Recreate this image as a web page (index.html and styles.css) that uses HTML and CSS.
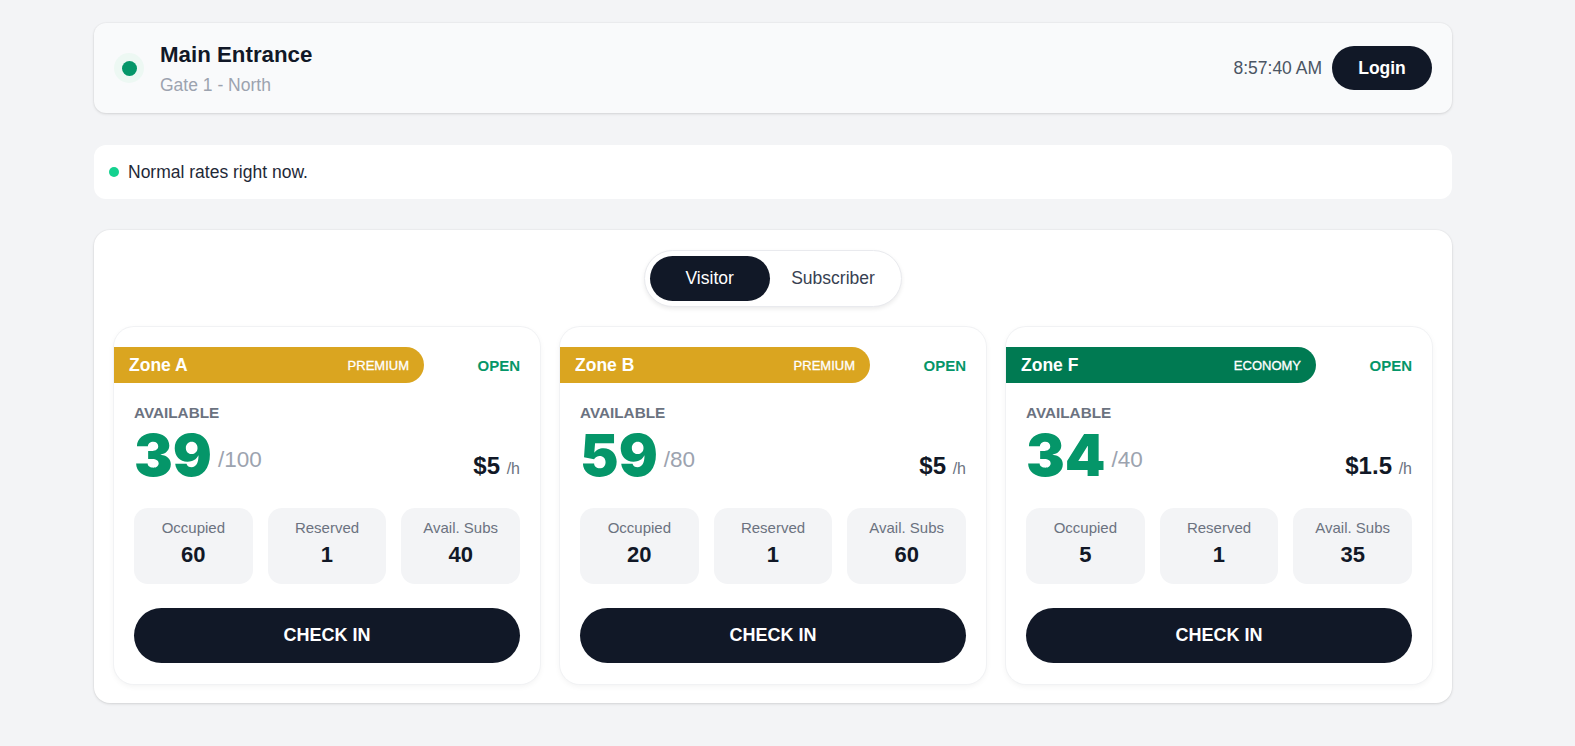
FILE: index.html
```html
<!DOCTYPE html>
<html lang="en">
<head>
<meta charset="utf-8">
<title>Main Entrance</title>
<link rel="stylesheet" href="styles.css">
</head>
<body>
<div class="page">
  <header class="gate-header">
    <div class="gate-info">
      <span class="status-dot"><span class="status-dot-inner"></span></span>
      <div class="gate-text">
        <div class="gate-title">Main Entrance</div>
        <div class="gate-sub">Gate 1 - North</div>
      </div>
    </div>
    <div class="gate-actions">
      <span class="clock">8:57:40 AM</span>
      <button class="login-btn">Login</button>
    </div>
  </header>

  <div class="rate-banner">
    <span class="rate-dot"></span>
    <span class="rate-text">Normal rates right now.</span>
  </div>

  <section class="main-card">
    <div class="toggle">
      <button class="toggle-btn active">Visitor</button>
      <button class="toggle-btn">Subscriber</button>
    </div>

    <div class="zones">
      <article class="zone">
        <div class="zone-head">
          <div class="zone-band premium">
            <span class="zone-name">Zone A</span>
            <span class="zone-tier">PREMIUM</span>
          </div>
          <span class="zone-status">OPEN</span>
        </div>
        <div class="zone-body">
          <div class="avail-label">AVAILABLE</div>
          <div class="avail-row">
            <div class="avail-count">
              <span class="avail-num">39</span>
              <span class="avail-total">/100</span>
            </div>
            <div class="price">$5 <span class="price-unit">/h</span></div>
          </div>
          <div class="stats">
            <div class="stat"><div class="stat-label">Occupied</div><div class="stat-value">60</div></div>
            <div class="stat"><div class="stat-label">Reserved</div><div class="stat-value">1</div></div>
            <div class="stat"><div class="stat-label">Avail. Subs</div><div class="stat-value">40</div></div>
          </div>
          <button class="checkin-btn">CHECK IN</button>
        </div>
      </article>

      <article class="zone">
        <div class="zone-head">
          <div class="zone-band premium">
            <span class="zone-name">Zone B</span>
            <span class="zone-tier">PREMIUM</span>
          </div>
          <span class="zone-status">OPEN</span>
        </div>
        <div class="zone-body">
          <div class="avail-label">AVAILABLE</div>
          <div class="avail-row">
            <div class="avail-count">
              <span class="avail-num">59</span>
              <span class="avail-total">/80</span>
            </div>
            <div class="price">$5 <span class="price-unit">/h</span></div>
          </div>
          <div class="stats">
            <div class="stat"><div class="stat-label">Occupied</div><div class="stat-value">20</div></div>
            <div class="stat"><div class="stat-label">Reserved</div><div class="stat-value">1</div></div>
            <div class="stat"><div class="stat-label">Avail. Subs</div><div class="stat-value">60</div></div>
          </div>
          <button class="checkin-btn">CHECK IN</button>
        </div>
      </article>

      <article class="zone">
        <div class="zone-head">
          <div class="zone-band economy">
            <span class="zone-name">Zone F</span>
            <span class="zone-tier">ECONOMY</span>
          </div>
          <span class="zone-status">OPEN</span>
        </div>
        <div class="zone-body">
          <div class="avail-label">AVAILABLE</div>
          <div class="avail-row">
            <div class="avail-count">
              <span class="avail-num">34</span>
              <span class="avail-total">/40</span>
            </div>
            <div class="price">$1.5 <span class="price-unit">/h</span></div>
          </div>
          <div class="stats">
            <div class="stat"><div class="stat-label">Occupied</div><div class="stat-value">5</div></div>
            <div class="stat"><div class="stat-label">Reserved</div><div class="stat-value">1</div></div>
            <div class="stat"><div class="stat-label">Avail. Subs</div><div class="stat-value">35</div></div>
          </div>
          <button class="checkin-btn">CHECK IN</button>
        </div>
      </article>
    </div>
  </section>
</div>
</body>
</html>
```

FILE: styles.css
```css
* { box-sizing: border-box; }

html, body {
  margin: 0;
  padding: 0;
}

body {
  background: #f3f4f6;
  font-family: "Liberation Sans", Arial, sans-serif;
  color: #111827;
  width: 1575px;
  height: 746px;
  overflow: hidden;
}

button {
  font-family: inherit;
  border: none;
  cursor: pointer;
}

.page {
  width: 1358px;
  margin-left: 94px;
  padding-top: 23px;
}

/* Header */
.gate-header {
  height: 90px;
  padding: 0 20px;
  display: flex;
  align-items: center;
  justify-content: space-between;
  background: #f9fafb;
  border-radius: 12px;
  box-shadow: 0 1px 3px rgba(0, 0, 0, 0.12), 0 0 0 1px rgba(0, 0, 0, 0.02);
}

.gate-info {
  display: flex;
  align-items: center;
  gap: 16px;
}

.status-dot {
  width: 30px;
  height: 30px;
  border-radius: 50%;
  background: #edf8f3;
  display: flex;
  align-items: center;
  justify-content: center;
}

.status-dot-inner {
  width: 15px;
  height: 15px;
  border-radius: 50%;
  background: #059669;
}

.gate-title {
  font-size: 22.3px;
  line-height: 26px;
  font-weight: 700;
  color: #111827;
}

.gate-sub {
  margin-top: 7px;
  font-size: 17.5px;
  line-height: 20px;
  color: #9ca3af;
}

.gate-actions {
  display: flex;
  align-items: center;
  gap: 10px;
}

.clock {
  font-size: 17.5px;
  color: #4b5563;
}

.login-btn {
  height: 44px;
  width: 100px;
  border-radius: 22px;
  background: #111827;
  color: #fff;
  font-size: 17.5px;
  font-weight: 700;
}

/* Rate banner */
.rate-banner {
  margin-top: 32px;
  height: 54px;
  padding: 0 15px;
  display: flex;
  align-items: center;
  gap: 9px;
  background: #fff;
  border-radius: 12px;
}

.rate-dot {
  width: 10px;
  height: 10px;
  border-radius: 50%;
  background: #14d18f;
}

.rate-text {
  font-size: 17.5px;
  color: #1f2937;
}

/* Main card */
.main-card {
  margin-top: 31px;
  padding: 20px 20px 19px;
  background: #fff;
  border-radius: 16px;
  box-shadow: 0 1px 3px rgba(0, 0, 0, 0.12), 0 0 0 1px rgba(0, 0, 0, 0.02);
}

.toggle {
  display: flex;
  width: max-content;
  margin: 0 auto;
  padding: 5px 5px;
  border: 1px solid #e9eaee;
  border-radius: 999px;
  background: #fff;
  box-shadow: 0 2px 4px rgba(0, 0, 0, 0.08);
}

.toggle-btn {
  height: 45px;
  min-width: 120px;
  padding: 0 21.5px;
  border-radius: 999px;
  background: transparent;
  color: #374151;
  font-size: 17.5px;
}

.toggle-btn.active {
  background: #111827;
  color: #fff;
}

.zones {
  margin-top: 20px;
  display: grid;
  grid-template-columns: repeat(3, 1fr);
  gap: 20px;
}

.zone {
  padding: 20px 0 21px;
  background: #fff;
  border-radius: 20px;
  box-shadow: 0 0 0 1px #f1f2f4, 0 2px 6px rgba(0, 0, 0, 0.06);
}

.zone-head {
  display: flex;
  align-items: center;
  justify-content: space-between;
  padding-right: 20px;
}

.zone-band {
  width: 310px;
  height: 36px;
  padding: 0 15px;
  display: flex;
  align-items: center;
  justify-content: space-between;
  border-radius: 0 18px 18px 0;
  color: #fff;
}

.zone-band.premium { background: #daa520; }
.zone-band.economy { background: #007a52; }

.zone-name {
  font-size: 17.5px;
  font-weight: 700;
}

.zone-tier {
  font-size: 13px;
  font-weight: 400;
  -webkit-text-stroke: 0.3px #fff;
}

.zone-status {
  font-size: 15px;
  font-weight: 700;
  color: #059669;
}

.zone-body {
  padding: 0 20px;
}

.avail-label {
  margin-top: 21px;
  font-size: 15.3px;
  line-height: 18px;
  font-weight: 700;
  color: #6b7280;
}

.avail-row {
  margin-top: 4px;
  display: flex;
  align-items: flex-end;
  justify-content: space-between;
}

.avail-count {
  display: flex;
  align-items: flex-end;
}

.avail-num {
  font-family: "Inter", "Liberation Sans", sans-serif;
  font-size: 58px;
  line-height: 58px;
  font-weight: 900;
  color: #059669;
}

.avail-total {
  margin-left: 6px;
  margin-bottom: 12px;
  font-size: 22.5px;
  line-height: 24px;
  color: #9ca3af;
}

.price {
  margin-bottom: 3px;
  font-size: 24px;
  line-height: 24px;
  font-weight: 700;
  color: #111827;
}

.price-unit {
  font-size: 16px;
  font-weight: 400;
  color: #6b7280;
}

.stats {
  margin-top: 24px;
  display: grid;
  grid-template-columns: repeat(3, 1fr);
  gap: 15px;
}

.stat {
  padding: 9px 0 11px;
  border-radius: 14px;
  background: #f3f4f6;
  text-align: center;
  line-height: 1.5;
}

.stat-label {
  font-size: 15px;
  color: #6b7280;
}

.stat-value {
  margin-top: -2px;
  padding-bottom: 2px;
  font-size: 22px;
  font-weight: 700;
  color: #111827;
}

.checkin-btn {
  margin-top: 24px;
  width: 100%;
  height: 55px;
  border-radius: 28px;
  background: #111827;
  color: #fff;
  font-size: 18px;
  font-weight: 700;
}
```
